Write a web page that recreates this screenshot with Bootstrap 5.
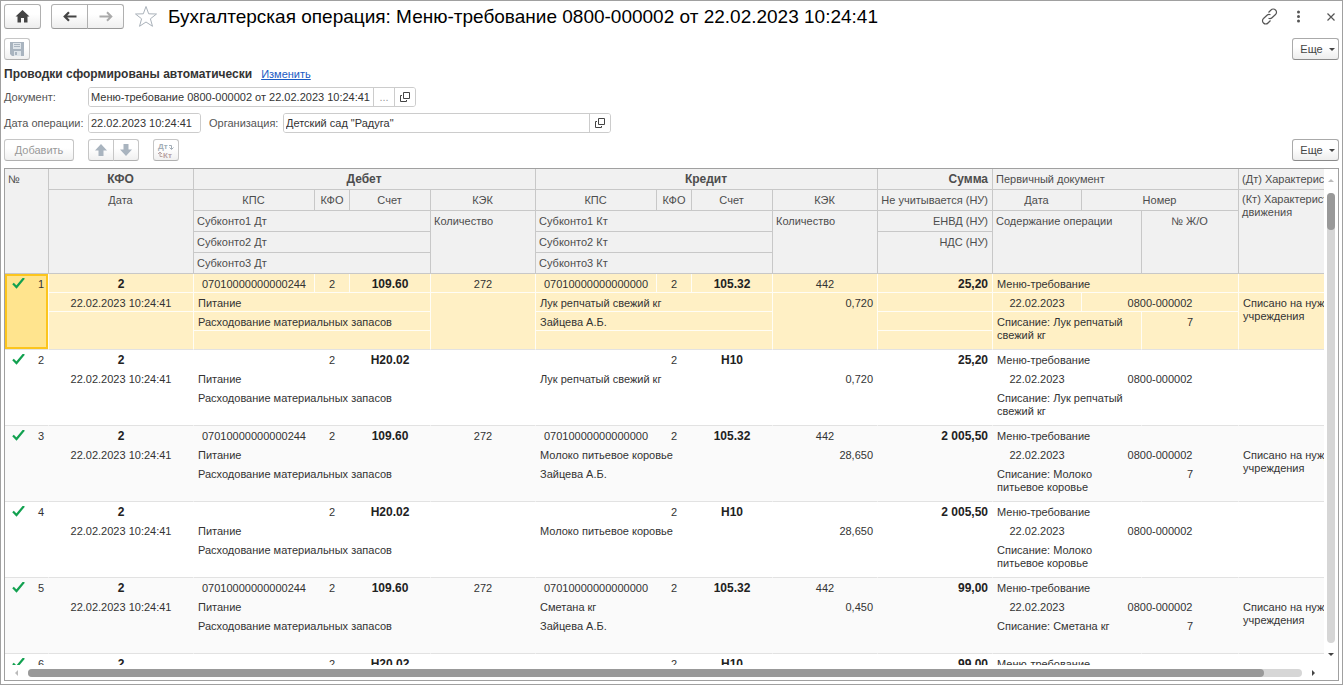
<!DOCTYPE html>
<html lang="ru">
<head>
<meta charset="utf-8">
<meta name="viewport" content="width=device-width, initial-scale=1">
<title>Бухгалтерская операция</title>
<link href="https://cdn.jsdelivr.net/npm/bootstrap@5.3.0/dist/css/bootstrap.min.css" rel="stylesheet">
<style>
  body { font: 11px/13px "Liberation Sans", Arial, sans-serif; color: #333; background: #fff; }
  .win { border: 1px solid #a0a0a0; padding: 3px; }
  .win-head { gap: 10px; }
  .win-title { font-size: 19px; line-height: 24px; color: #000; margin: 0; font-weight: 400; }
  .tb { --bs-btn-padding-x: 0; --bs-btn-padding-y: 0; --bs-btn-font-size: 11px; --bs-btn-line-height: 18px;
        --bs-btn-border-radius: 3px; --bs-btn-disabled-opacity: 1;
        --bs-btn-color: #444; --bs-btn-hover-color: #222; --bs-btn-disabled-color: #999;
        height: 22px; border: 1px solid #b9b9b9; border-bottom-color: #999;
        background: linear-gradient(#fff 40%, #ededed); display: inline-flex; align-items: center; justify-content: center; }
  .tb:disabled { border-color: #c6c6c6; border-bottom-color: #b0b0b0; background: linear-gradient(#fff 40%, #f0f0f0); }
  .tb-lg { height: 25px; width: 37px; border-color: #b0b0b0; border-bottom-color: #999; }
  .tb-lg:disabled { border-color: #b0b0b0; border-bottom-color: #999; }
  .tb-sq { width: 26px; }
  .tb-more { width: 47px; gap: 6px; padding-left: 4px; font-size: 11px; border-color: #aaa; border-bottom-color: #8a8a8a; }
  .tb-add { width: 70px; }
  .tri { border: 3px solid transparent; border-top-color: #444; border-bottom: 0; }
  .bare { border: 0; background: none; padding: 0; display: flex; }
  .save-row { margin-top: 9px; }
  .status { gap: 9px; margin: 8px 0 6px; }
  .status strong { font-size: 12px; line-height: 13px; }
  .status a { color: #1a5bc4; }
  .form-rows { display: grid; gap: 6px; }
  .fld { height: 20px; border: 1px solid #ccc; border-radius: 3px; background: #fff; display: flex; overflow: hidden; }
  .fld input { border: 0; padding: 0 2px; font-size: 11px; color: #333; flex: 1; min-width: 0; outline: 0; }
  .fld button { border: 0; border-left: 1px solid #ccc; background: #fff; width: 21px; padding: 0; color: #999;
                display: flex; align-items: center; justify-content: center; }
  .cap { color: #555; width: 84px; white-space: nowrap; }
  .cap-org { width: 74px; }
  .f-doc { width: 328px; } .f-date { width: 113px; } .f-org { width: 328px; }
  .cmds { gap: 14px; margin: 6px 0 7px; }
  .frame { border: 1px solid #a0a0a0; }
  .pane { overflow: hidden; position: relative; }
  .ledger { table-layout: fixed; width: 1389px; border-collapse: separate; border-spacing: 0; position: absolute; }
  .ledger th, .ledger td { padding: 3px 4px 0 4px; vertical-align: top; text-align: left; font-weight: 400; overflow: hidden; }
  .ledger th { background: #f1f1f1; color: #4d4d4d; border: solid #c8c8c8; border-width: 0 1px 1px 0; height: 21px; line-height: 14px; padding-left: 3px; white-space: nowrap; }
  .ledger th.wrapped { white-space: normal; line-height: 13px; }
  .ledger td { height: 19px; padding: 4px 4px 0 4px; border: solid transparent; border-width: 0 1px 1px 0; color: #333; }
  .ledger .c { text-align: center; } .ledger .r { text-align: right; }
  .ledger .b { font-weight: 700; font-size: 12px; }
  .ledger td.b { color: #222; }
  .ledger .odd td { background: #fafafa; }
  .ledger td.end, .ledger tr.end td { border-bottom-color: #e2e2e2; }
  .ledger .sel td { background: #fff0c5; border-color: #fffdf5; }
  .ledger .sel td.end, .ledger .sel tr.end td { border-bottom-color: #e2e2e2; }
  .ledger .sel td.num { background: #ffe48e; box-shadow: inset 0 0 0 2px #fcc51d; }
  .ledger .num svg { float: left; margin-left: 3px; }
  .vbar { width: 14px; } .hbar { height: 15px; padding: 0 22px 0 9px; gap: 9px; }
  .track { background: #d6d6d6; border-radius: 4px; }
  .thumb { background: #999; border-radius: 4px; }
  .vbar .track { width: 8px; } .vbar .thumb { height: 8.3%; }
  .hbar .track { height: 8px; } .hbar .thumb { height: 8px; width: 97%; }
</style>
</head>
<body>
<div class="win vh-100 d-flex flex-column">
  <header class="win-head d-flex align-items-center pe-1">
    <button class="btn tb tb-lg" aria-label="Домой"><svg width="15" height="13" viewBox="0 0 15 13"><path fill="#444" d="M7.500 0 14.500 6.500H12.500V12.500H9V8H6V12.500H2.500V6.500H.5z"/></svg></button>
    <div class="btn-group">
      <button class="btn tb tb-lg" aria-label="Назад"><svg width="14" height="11" viewBox="0 0 14 11"><path fill="none" stroke="#444" stroke-width="2.200" d="M13.500 5.500H2M6 1.200 1.700 5.500 6 9.800"/></svg></button>
      <button class="btn tb tb-lg" disabled aria-label="Вперед"><svg width="14" height="11" viewBox="0 0 14 11"><path fill="none" stroke="#aaa" stroke-width="2" d="M.5 5.500H12M8 1.200 12.300 5.500 8 9.800"/></svg></button>
    </div>
    <button class="bare" aria-label="Избранное"><svg width="24" height="23" viewBox="0 0 24 23"><path fill="#fff" stroke="#aab2ba" d="M12 1.500 14.700 8.800 22.500 9 16.400 13.800 18.500 21.300 12 17 5.500 21.300 7.600 13.800 1.500 9 9.300 8.800z"/></svg></button>
    <h1 class="win-title flex-grow-1">Бухгалтерская операция: Меню-требование 0800-000002 от 22.02.2023 10:24:41</h1>
    <button class="bare me-2" aria-label="Ссылка"><svg width="17" height="17" viewBox="0 0 17 17" fill="none" stroke="#555" stroke-width="1.200"><path d="M7.500 4.500 10 2a3 3 0 0 1 4.500 0 3 3 0 0 1 0 4.500L11 9.800a3 3 0 0 1-3.500.5M9.500 12.500 7 15a3 3 0 0 1-4.500 0 3 3 0 0 1 0-4.500L6 7.200a3 3 0 0 1 3.500-.5"/></svg></button>
    <button class="bare me-3" aria-label="Меню"><svg width="5" height="13" viewBox="0 0 5 13" fill="#555"><circle cx="2.500" cy="2" r="1.500"/><circle cx="2.500" cy="6.500" r="1.500"/><circle cx="2.500" cy="11" r="1.500"/></svg></button>
    <button class="bare" aria-label="Закрыть"><svg width="8" height="8" viewBox="0 0 8 8"><path stroke="#555" stroke-width="1.200" d="M.5.5l7 7m0-7-7 7"/></svg></button>
  </header>

  <div class="save-row d-flex justify-content-between">
    <button class="btn tb tb-sq" disabled aria-label="Записать"><svg width="14" height="14" viewBox="0 0 14 14"><path fill="#a9b4bf" d="M0 0h14v14H2L0 12z"/><path fill="#dfe5ea" d="M3 1h8v6H3zM4 9h7v5H4z"/><path stroke="#a9b4bf" d="M4 2.500h6M4 4.500h6"/><path fill="#a9b4bf" d="M5 10h2v3H5z"/></svg></button>
    <button class="btn tb tb-more">Еще <span class="tri"></span></button>
  </div>

  <div class="status d-flex"><strong>Проводки сформированы автоматически</strong><a href="#">Изменить</a></div>

  <div class="form-rows">
    <div class="d-flex align-items-center">
      <label class="cap" for="doc">Документ:</label>
      <div class="fld f-doc"><input id="doc" value="Меню-требование 0800-000002 от 22.02.2023 10:24:41">
        <button aria-label="Выбрать">...</button><button aria-label="Открыть"><svg width="10" height="10" viewBox="0 0 10 10"><path fill="none" stroke="#444" d="M3.500.5h6v6h-6zM2 3.500H.5v6h6V8"/></svg></button></div>
    </div>
    <div class="d-flex align-items-center">
      <label class="cap" for="date">Дата операции:</label>
      <div class="fld f-date me-2"><input id="date" value="22.02.2023 10:24:41"></div>
      <label class="cap cap-org" for="org">Организация:</label>
      <div class="fld f-org"><input id="org" value="Детский сад &quot;Радуга&quot;"><button aria-label="Открыть"><svg width="10" height="10" viewBox="0 0 10 10"><path fill="none" stroke="#444" d="M3.500.5h6v6h-6zM2 3.500H.5v6h6V8"/></svg></button></div>
    </div>
  </div>

  <div class="cmds d-flex">
    <button class="btn tb tb-add" disabled>Добавить</button>
    <div class="btn-group">
      <button class="btn tb tb-sq" disabled aria-label="Вверх"><svg width="12" height="12" viewBox="0 0 12 12"><path fill="#a9b4bf" d="M6 0 12 6.500H8.500V12H3.500V6.500H0z"/></svg></button>
      <button class="btn tb tb-sq" disabled aria-label="Вниз"><svg width="12" height="12" viewBox="0 0 12 12"><path fill="#a9b4bf" d="M6 12 0 5.500H3.500V0H8.500V5.500H12z"/></svg></button>
    </div>
    <button class="btn tb tb-sq" disabled aria-label="Дт/Кт"><svg width="18" height="17" viewBox="0 0 18 17" font-family="Liberation Sans" font-size="8" font-weight="700"><text x="1" y="7" fill="#a3adb6">Дт</text><text x="6" y="16" fill="#b8a3a3">Кт</text><path fill="none" stroke="#a3adb6" d="M12 3.500h2.500V7M12.500 5.500l2 2 2-2"/><path fill="none" stroke="#b8a3a3" d="M5.500 14.500H3V10.500M1 12l2-2 2 2"/></svg></button>
    <button class="btn tb tb-more ms-auto">Еще <span class="tri"></span></button>
  </div>

  <main class="frame flex-grow-1 d-flex flex-column">
    <div class="flex-grow-1 d-flex">
      <div class="pane flex-grow-1">
        <table class="ledger">
          <colgroup id="cols"></colgroup>
          <thead>
            <tr><th rowspan="5">№</th><th class="c b">КФО</th><th colspan="4" class="c b">Дебет</th><th colspan="4" class="c b">Кредит</th><th class="r b">Сумма</th><th colspan="3">Первичный документ</th><th>(Дт) Характеристика движения</th></tr>
            <tr><th rowspan="4" class="c">Дата</th><th class="c">КПС</th><th class="c px-0">КФО</th><th class="c">Счет</th><th class="c">КЭК</th><th class="c">КПС</th><th class="c px-0">КФО</th><th class="c">Счет</th><th class="c">КЭК</th><th class="r">Не учитывается (НУ)</th><th class="c">Дата</th><th colspan="2" class="c">Номер</th><th rowspan="4" class="wrapped">(Кт) Характеристика движения</th></tr>
            <tr><th colspan="3">Субконто1 Дт</th><th rowspan="3">Количество</th><th colspan="3">Субконто1 Кт</th><th rowspan="3">Количество</th><th class="r">ЕНВД (НУ)</th><th colspan="2" rowspan="3">Содержание операции</th><th rowspan="3" class="c">№ Ж/О</th></tr>
            <tr><th colspan="3">Субконто2 Дт</th><th colspan="3">Субконто2 Кт</th><th rowspan="2" class="r">НДС (НУ)</th></tr>
            <tr><th colspan="3">Субконто3 Дт</th><th colspan="3">Субконто3 Кт</th></tr>
          </thead>
        </table>
      </div>
      <div class="vbar d-flex flex-column align-items-center py-2">
        <svg width="6" height="16" viewBox="0 0 6 16"><path fill="#bbb" d="M0 5h6L3 2z"/></svg>
        <div class="track flex-grow-1 d-flex flex-column"><div class="thumb w-100"></div></div>
        <svg width="6" height="14" viewBox="0 0 6 14"><path fill="#444" d="M0 10h6l-3 3z"/></svg>
      </div>
    </div>
    <div class="hbar d-flex align-items-center">
      <svg width="5" height="6" viewBox="0 0 5 6"><path fill="#bbb" d="M4 0v6L1 3z"/></svg>
      <div class="track flex-grow-1"><div class="thumb"></div></div>
      <svg width="5" height="6" viewBox="0 0 5 6"><path fill="#444" d="M1 0v6l3-3z"/></svg>
    </div>
  </main>
</div>
<script src="https://cdn.jsdelivr.net/npm/bootstrap@5.3.0/dist/js/bootstrap.bundle.min.js"></script>
<script>
  const widths = [44, 145, 121, 35, 81, 105, 121, 35, 81, 105, 115, 89, 60, 97, 155];
  document.getElementById('cols').innerHTML = widths.map(w => `<col style="width:${w}px">`).join('');

  const entries = [
    { full: true, item: 'Лук репчатый свежий кг', qty: '0,720', sum: '25,20', note: 'Лук репчатый свежий кг' },
    { full: false, item: 'Лук репчатый свежий кг', qty: '0,720', sum: '25,20', note: 'Лук репчатый свежий кг' },
    { full: true, item: 'Молоко питьевое коровье', qty: '28,650', sum: '2 005,50', note: 'Молоко питьевое коровье' },
    { full: false, item: 'Молоко питьевое коровье', qty: '28,650', sum: '2 005,50', note: 'Молоко питьевое коровье' },
    { full: true, item: 'Сметана кг', qty: '0,450', sum: '99,00', note: 'Сметана кг' },
    { full: false, item: 'Сметана кг', qty: '0,450', sum: '99,00', note: 'Сметана кг' }
  ];
  const tick = '<svg width="13" height="12" viewBox="0 0 13 12"><path fill="none" stroke="#12a150" stroke-width="2.200" d="M1 5.500 4.500 9 12 0"/></svg>';
  const table = document.querySelector('.ledger');
  entries.forEach((e, i) => {
    const f = e.full, body = document.createElement('tbody');
    body.className = i === 0 ? 'sel' : (i % 2 ? '' : 'odd');
    body.innerHTML = `
      <tr><td rowspan="4" class="num r end">${tick}${i + 1}</td><td class="c b">2</td>
        <td class="c">${f ? '07010000000000244' : ''}</td><td class="c">2</td><td class="c b">${f ? '109.60' : 'Н20.02'}</td><td class="c">${f ? '272' : ''}</td>
        <td class="c">${f ? '07010000000000000' : ''}</td><td class="c">2</td><td class="c b">${f ? '105.32' : 'Н10'}</td><td class="c">${f ? '442' : ''}</td>
        <td class="r b">${e.sum}</td><td colspan="3">Меню-требование</td><td></td></tr>
      <tr><td class="c">22.02.2023 10:24:41</td><td colspan="3">Питание</td><td rowspan="3" class="end"></td>
        <td colspan="3">${e.item}</td><td rowspan="3" class="r end">${e.qty}</td><td></td>
        <td class="c">22.02.2023</td><td colspan="2" class="c">0800-000002</td><td rowspan="3" class="end">${f ? 'Списано на нужды<br>учреждения' : ''}</td></tr>
      <tr><td rowspan="2" class="end"></td><td colspan="3">Расходование материальных запасов</td><td colspan="3">${f ? 'Зайцева А.Б.' : ''}</td><td></td>
        <td colspan="2" rowspan="2" class="end">Списание: ${e.note}</td><td rowspan="2" class="c end">${f ? '7' : ''}</td></tr>
      <tr class="end"><td colspan="3"></td><td colspan="3"></td><td></td></tr>`;
    table.append(body);
  });
</script>
</body>
</html>
